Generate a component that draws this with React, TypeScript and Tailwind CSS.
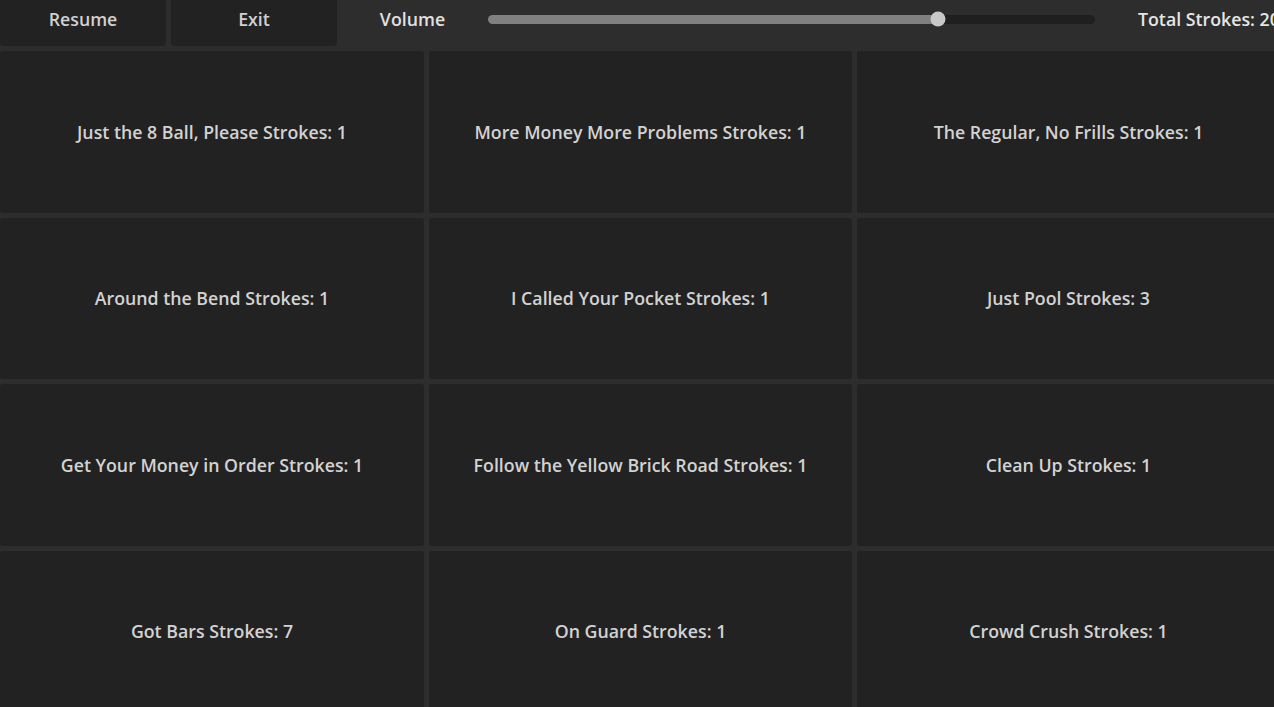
const levels = [
  { name: "Just the 8 Ball, Please", strokes: 1 },
  { name: "More Money More Problems", strokes: 1 },
  { name: "The Regular, No Frills", strokes: 1 },
  { name: "Around the Bend", strokes: 1 },
  { name: "I Called Your Pocket", strokes: 1 },
  { name: "Just Pool", strokes: 3 },
  { name: "Get Your Money in Order", strokes: 1 },
  { name: "Follow the Yellow Brick Road", strokes: 1 },
  { name: "Clean Up", strokes: 1 },
  { name: "Got Bars", strokes: 7 },
  { name: "On Guard", strokes: 1 },
  { name: "Crowd Crush", strokes: 1 },
];

export default function App() {
  const volume = 0.742;

  return (
    <div
      className="h-[707px] w-[1274px] overflow-hidden bg-[#2d2d2d] text-[#d4d4d4] font-semibold"
      style={{ fontFamily: '"Open Sans", "Noto Sans", sans-serif' }}
    >
      <div className="w-[1280px]">
        {/* top bar */}
        <div className="flex h-[51px] items-start">
          <button className="h-[46px] w-[166px] rounded-b-[4px] bg-[#222222] pb-[8px] text-[17.75px] text-[#d0d0d0]">
            Resume
          </button>
          <button className="ml-[5px] h-[46px] w-[166px] rounded-b-[4px] bg-[#222222] pb-[8px] text-[17.75px] text-[#d0d0d0]">
            Exit
          </button>
          <div className="flex h-[38px] w-[151px] items-center justify-center text-[17.75px] text-[#e0e0e0]">
            Volume
          </div>
          <div className="flex h-[38px] w-[607px] items-center">
            <div className="relative h-[9px] w-full rounded-full bg-[#1f1f1f]">
              <div
                className="h-full rounded-full bg-[#808080]"
                style={{ width: `${volume * 100}%` }}
              />
              <div
                className="absolute top-1/2 h-[15px] w-[15px] -translate-x-1/2 -translate-y-1/2 rounded-full bg-[#c8c8c8]"
                style={{ left: `${volume * 100}%` }}
              />
            </div>
          </div>
          <div className="ml-[43px] flex h-[38px] items-center whitespace-nowrap text-[17.75px] text-[#e6e6e6]">
            Total Strokes: 20
          </div>
        </div>

        {/* level grid */}
        <div className="grid grid-cols-[424px_423px_423px] auto-rows-[161.67px] gap-[5px]">
          {levels.map((level) => (
            <button
              key={level.name}
              className="flex items-center justify-center rounded-[3px] bg-[#222222] text-[17.75px] text-[#d2d2d2]"
            >
              {level.name} Strokes: {level.strokes}
            </button>
          ))}
        </div>
      </div>
    </div>
  );
}
